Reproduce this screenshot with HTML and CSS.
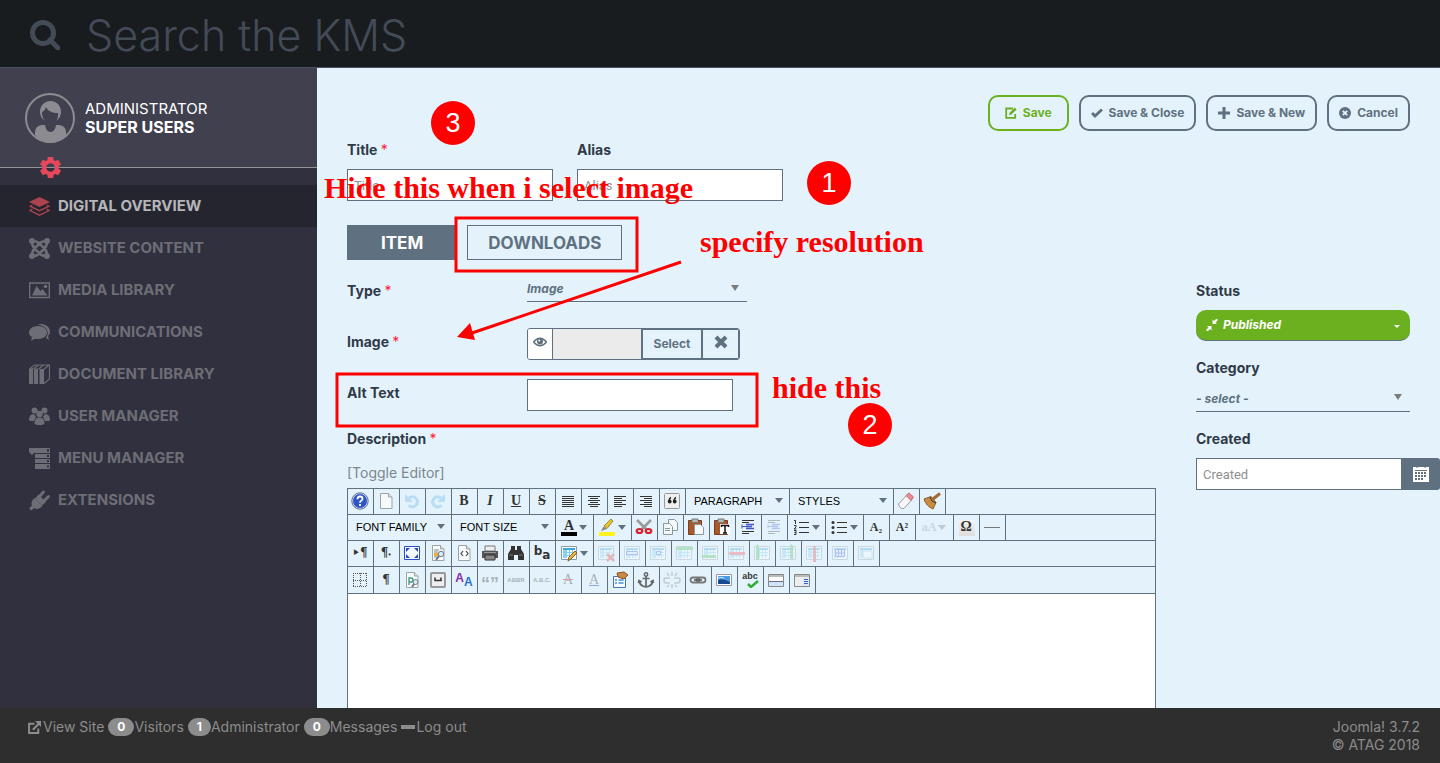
FILE: index.html
```html
<!DOCTYPE html>
<html lang="en">
<head>
<meta charset="utf-8">
<title>KMS – Digital Overview</title>
<link rel="stylesheet" href="styles.css">
</head>
<body>
<svg class="sprite" aria-hidden="true">
  <defs>
    <symbol id="pen-box" viewBox="0 0 12 12"><path d="M8 1.5H1.2v9.3h9V7" fill="none" stroke="currentColor" stroke-width="1.8"/><path d="M4 8.3 4.6 5.800 9.800.6l1.800 1.800L6.400 7.600z" fill="currentColor"/></symbol>
    <symbol id="out" viewBox="0 0 12 12"><path d="M6 2.500H1v8.500h8.500V7" fill="none" stroke="currentColor" stroke-width="1.800"/><path d="M4.500 8 10 2.500" stroke="currentColor" stroke-width="2"/><path d="M6.500 0H12v5.500z" fill="currentColor"/></symbol>
    <symbol id="page" viewBox="0 0 18 18"><path d="M3.500 1.500h8l3.500 3.500v11.500H3.500z" fill="#f7fafb" stroke="#9aa5a5"/><path d="M11.500 1.500V5H15" fill="#dfe5e5" stroke="#9aa5a5"/></symbol>
    <symbol id="tbl" viewBox="0 0 18 18"><path d="M1.500 2.500h15v13h-15z" fill="#fff" stroke="#8d9ca5"/><path d="M3 4h12v2H3z" fill="#39a9e0"/><path d="M3 6h3v8H3z" fill="#8fd6f5"/><path d="M3 8.500h12M3 11.500h12M6.500 6v8M9.500 6v8M12.500 6v8" stroke="#7ccbf0" fill="none"/></symbol>
    <symbol id="clip" viewBox="0 0 18 18"><path d="M1.500 2.500h13v14h-13z" fill="#a8592c" stroke="#7d3e1b"/><path d="M5 1h6v3.500H5z" fill="#b9b9b9" stroke="#777"/></symbol>
    <symbol id="box" viewBox="0 0 18 18"><rect x="1.500" y="1.500" width="15" height="15" rx="1" fill="#eee" stroke="#999"/></symbol>
  </defs>
</svg>

<header class="topbar">
  <svg class="search-icon" viewBox="0 0 30 30" aria-hidden="true"><circle cx="13" cy="13" r="10.500" fill="none" stroke="currentColor" stroke-width="5"/><path d="m20 20 8 8" stroke="currentColor" stroke-width="5" stroke-linecap="round"/></svg>
  <input class="search" type="search" placeholder="Search the KMS" aria-label="Search the KMS">
</header>

<div class="body">
  <aside class="sidebar">
    <div class="profile">
      <svg class="avatar" viewBox="0 0 50 50" aria-hidden="true"><circle cx="25" cy="25" r="24" fill="none" stroke="#8b8b91" stroke-width="2"/><path d="M10 42V39q0-6 7-7h3q1 7 5.500 7t5.500-7h3q7 1 7 7v3q-6 8-15.500 8T10 42z" fill="#8b8b91"/><path d="M25.500 8C32 8 36 13 36 19c0 4-2 7-5 9 2-2 2-5 2-8-6 0-10-2-12-6-1 3-2 4-4 5 0 4 1 7 3 9-3-2-5-5-5-9 0-6 4-11 10.500-11z" fill="#8b8b91"/></svg>
      <div class="who"><span>ADMINISTRATOR</span><strong>SUPER USERS</strong></div>
      <button class="gear" aria-label="Settings"><svg viewBox="0 0 20 20"><path fill-rule="evenodd" fill="#e8475b" d="M7.500 0h5l.5 3 1.500.8 2.800-1.100L20 7l-2.300 2v2L20 13l-2.700 4.300-2.800-1.100-1.500.8-.5 3h-5L7 17l-1.500-.8-2.800 1.100L0 13l2.300-2V9L0 7l2.700-4.300 2.800 1.100L7 3zM10 6a4 4 0 1 0 0 8 4 4 0 0 0 0-8z"/></svg></button>
    </div>
    <nav class="nav" aria-label="Main">
      <a class="active" href="#"><svg viewBox="0 0 21 21"><path d="M10.500 1 21 6l-10.500 5L0 6z" fill="#ac4350"/><path d="m3.500 9-2.500 1.200 9.500 4.500 9.500-4.500L17.500 9M3.500 13 1 14.500l9.500 4.700 9.500-4.700L17.500 13" fill="none" stroke="#ac4350" stroke-width="1.300"/></svg>DIGITAL OVERVIEW</a>
      <a href="#"><svg viewBox="0 0 21 21" fill="none" stroke="currentColor"><g fill="currentColor" stroke="none"><circle cx="3" cy="3" r="3"/><circle cx="18" cy="3" r="3"/><circle cx="3" cy="18" r="3"/><circle cx="18" cy="18" r="3"/></g><path d="M3 3q0 5 2.500 7.500l5 5Q13 18 18 18M18 18q0-5-2.500-7.500l-5-5Q8 3 3 3M18 3q-5 0-7.500 2.500l-5 5Q3 13 3 18M3 18q5 0 7.500-2.500l5-5Q18 8 18 3" stroke-width="2.600"/></svg>WEBSITE CONTENT</a>
      <a href="#"><svg viewBox="0 0 21 21"><path d="M.7 3h19.600v14.500H.7z" fill="none" stroke="currentColor" stroke-width="1.400"/><path d="M3 15.500 7.500 6l4 5 2-2 5 6.500z" fill="currentColor"/><circle cx="16.500" cy="6.500" r="1.800" fill="currentColor"/></svg>MEDIA LIBRARY</a>
      <a href="#"><svg viewBox="0 0 21 21" fill="currentColor"><path d="M9 4c5 0 9 2.800 9 6.500S14 17 9 17c-1 0-2 0-3-.3L2 19l1-4C1 14 0 12.500 0 10.500 0 6.800 4 4 9 4z"/><path d="M9 2.500c7-2 12 3 12 7 0 2-1 3.500-2 4.500l1 4-3-2c3-4 3-11-8-13.500z"/></svg>COMMUNICATIONS</a>
      <a href="#"><svg viewBox="0 0 21 21"><path d="M0 5l4-1v16H0zM5 4.500h4V20H5zM10.500 5h4.500v15h-4.500z" fill="currentColor"/><path d="m.5 5 5-4h15v14L15 19.500M4.500 5l5-4M9.500 5l5-4M14.500 5.500l5.500-4.500" fill="none" stroke="currentColor" stroke-width="1.200"/></svg>DOCUMENT LIBRARY</a>
      <a href="#"><svg viewBox="0 0 21 21" fill="currentColor"><circle cx="5.500" cy="4.500" r="3"/><circle cx="15.500" cy="4.500" r="3"/><path d="M0 14q0-6 5-6l2 3-2 4H1zM21 14q0-6-5-6l-2 3 2 4h4z"/><circle cx="10.500" cy="8" r="3.200"/><path d="M5.500 17q0-5.500 5-5.500t5 5.500q0 2-5 2t-5-2z"/></svg>USER MANAGER</a>
      <a href="#"><svg viewBox="0 0 21 21" fill="currentColor"><path fill-rule="evenodd" d="M0 0h21v5H5L3 7 0 4zM18 1v2.500h2V1zM6 6h15v4H6zM18 7v2h2V7zM6 11h15v4H6zM18 12v2h2v-2zM6 16h15v5H6zM18 17.500v2h2v-2z"/></svg>MENU MANAGER</a>
      <a href="#"><svg viewBox="0 0 21 21"><path d="m5.500 8 8 8q-4 4.500-8.500 2L2.500 20.500 0 18.500l3-3q-2-4 2.500-7.500z" fill="currentColor"/><path d="M6 8.500 13 15.500 17 12 9.500 4.500z" fill="currentColor"/><path d="m10.500 6.500 4-4.500M15 11l4.500-4.500" stroke="currentColor" stroke-width="3" stroke-linecap="round"/></svg>EXTENSIONS</a>
    </nav>
  </aside>

  <main class="main">
    <div class="actions">
      <button class="btn save"><svg><use href="#pen-box"/></svg>Save</button>
      <button class="btn"><svg viewBox="0 0 12 12"><path d="m1 6 3 3 7-6.500" fill="none" stroke="currentColor" stroke-width="3"/></svg>Save &amp; Close</button>
      <button class="btn"><svg viewBox="0 0 12 12"><path d="M6 0v12M0 6h12" stroke="currentColor" stroke-width="3"/></svg>Save &amp; New</button>
      <button class="btn"><svg viewBox="0 0 12 12"><circle cx="6" cy="6" r="6" fill="currentColor"/><path d="m3.800 3.800 4.400 4.400M8.200 3.800 3.800 8.200" stroke="#e4f3fb" stroke-width="1.800"/></svg>Cancel</button>
    </div>

    <div class="heading-fields">
      <div class="field"><label for="title">Title <i>*</i></label><input id="title" class="text" placeholder="Title"></div>
      <div class="field"><label for="alias">Alias</label><input id="alias" class="text" placeholder="Alias"></div>
    </div>

    <div class="tabs"><button class="tab on">ITEM</button><button class="tab">DOWNLOADS</button></div>

    <div class="columns">
      <section class="form">
        <div class="row"><label for="type">Type <i>*</i></label><span class="picker type"><select id="type"><option>Image</option></select></span></div>
        <div class="row"><label for="image">Image <i>*</i></label>
          <div class="media">
            <button class="eye" aria-label="Preview"><svg viewBox="0 0 14 10"><path d="M.5 5Q7-2.500 13.500 5 7 12.500.5 5z" fill="none" stroke="currentColor" stroke-width="1.400"/><circle cx="7" cy="4.500" r="3" fill="currentColor"/><circle cx="6.300" cy="3.600" r="1" fill="#fff"/></svg></button>
            <input id="image" readonly>
            <button class="pick">Select</button>
            <button class="clear" aria-label="Clear"><svg viewBox="0 0 14 14"><path d="m2 2 10 10M12 2 2 12" stroke="currentColor" stroke-width="4"/></svg></button>
          </div></div>
        <div class="row"><label for="alt">Alt Text</label><input id="alt" class="text"></div>
        <label class="desc" for="description">Description <i>*</i></label>
        <a class="toggle" href="#">[Toggle Editor]</a>

        <div class="editor">
          <div class="tools">
            <button aria-label="Help"><svg viewBox="0 0 18 18"><circle cx="9" cy="9" r="7.500" fill="#2f55c8" stroke="#dbe4f5" stroke-width="1"/><circle cx="9" cy="9" r="8.200" fill="none" stroke="#5b6a92"/><path d="M6.500 7.200q0-2.700 2.500-2.700t2.500 2.200q0 1.300-1.300 2T9 10.800M9 12v2" fill="none" stroke="#fff" stroke-width="1.800"/></svg></button>
            <button aria-label="New document"><svg><use href="#page"/></svg></button>
            <button class="off" aria-label="Undo"><svg viewBox="0 0 18 18"><path d="M6 6q5-3 7.500 1t-1.500 7q-3 2-6.500-.5" fill="none" stroke="#55aee8" stroke-width="3"/><path d="M2 2v8h8z" fill="#55aee8"/></svg></button>
            <button class="off" aria-label="Redo"><svg viewBox="0 0 18 18"><path d="M12 6Q7 3 4.500 7T6 14q3 2 6.500-.5" fill="none" stroke="#55aee8" stroke-width="3"/><path d="M16 2v8H8z" fill="#55aee8"/></svg></button>
            <button class="b">B</button><button class="em">I</button><button class="u">U</button><button class="s">S</button>
            <button aria-label="Justify"><svg viewBox="0 0 18 18"><path d="M3 4.500h12M3 6.500h12M3 8.500h12M3 10.500h12M3 12.500h12M3 14.500h12" stroke="#333"/></svg></button>
            <button aria-label="Center"><svg viewBox="0 0 18 18"><path d="M3 4.500h12M5 6.500h8M3 8.500h12M5 10.500h8M3 12.500h12M5 14.500h8" stroke="#333"/></svg></button>
            <button aria-label="Left"><svg viewBox="0 0 18 18"><path d="M3 4.500h12M3 6.500h8M3 8.500h12M3 10.500h8M3 12.500h12M3 14.500h8" stroke="#333"/></svg></button>
            <button aria-label="Right"><svg viewBox="0 0 18 18"><path d="M3 4.500h12M7 6.500h8M3 8.500h12M7 10.500h8M3 12.500h12M7 14.500h8" stroke="#333"/></svg></button>
            <button aria-label="Blockquote"><svg viewBox="0 0 18 18"><use href="#box"/><path d="M8 5.500Q6.500 6 6 8.500M13 5.500Q11.500 6 11 8.500" stroke="#222" stroke-width="1.500" fill="none"/><circle cx="6.700" cy="9.500" r="1.900" fill="#222"/><circle cx="11.700" cy="9.500" r="1.900" fill="#222"/></svg></button>
            <span class="drop"><select aria-label="Format"><option>PARAGRAPH</option></select></span>
            <span class="drop"><select aria-label="Styles"><option>STYLES</option></select></span>
            <button aria-label="Clear formatting"><svg viewBox="0 0 18 18"><path d="m1.500 12 8-8.500 5.500 4-8 9q-4 1-5.500-4.500z" fill="#f8f6f6" stroke="#999"/><path d="m9 3.500 3-2.500 4.500 4-2.500 3.500z" fill="#ef8995" stroke="#c46c78"/></svg></button>
            <button aria-label="Clean up"><svg viewBox="0 0 18 18"><path d="m1 7 7-2.500 5 6L10 17Q3 14 1 7z" fill="#c98a42" stroke="#8e5c24"/><path d="m10 7 7-5.500" stroke="#a46a2d" stroke-width="3"/><path d="M7 5q1 5 6 6" fill="none" stroke="#333"/></svg></button>
          </div>
          <div class="tools">
            <span class="drop"><select aria-label="Font family"><option>FONT FAMILY</option></select></span>
            <span class="drop"><select aria-label="Font size"><option>FONT SIZE</option></select></span>
            <button class="split ink" aria-label="Text colour"><span>A</span></button>
            <button class="split" aria-label="Highlight"><svg viewBox="0 0 18 18"><path d="M1 14h16v4H1z" fill="#fff21f"/><path d="m6 8 7-7 2 2-6 7.500z" fill="#e9c52c" stroke="#9b8b3a"/><path d="m3 13 2.500-4.500L9 11z" fill="#888"/></svg></button>
            <button aria-label="Cut"><svg viewBox="0 0 18 18"><path d="m2 2 11 11M16 2 5 13" stroke="#999" stroke-width="2.500"/><ellipse cx="4.500" cy="13" rx="2.800" ry="2" fill="#f6d4d4" stroke="#cf2636" stroke-width="2.200"/><ellipse cx="13.500" cy="13" rx="2.800" ry="2" fill="#f6d4d4" stroke="#cf2636" stroke-width="2.200"/></svg></button>
            <button aria-label="Copy"><svg viewBox="0 0 18 18"><path d="M7.500 1.500h6l3 3v8h-9z" fill="#f5f9f9" stroke="#8a9a9a"/><path d="M2.500 5.500h6l3 3v8h-9z" fill="#f5f9f9" stroke="#8a9a9a"/><path d="M4 10.500h5M4 12.500h5" stroke="#8a9a9a"/></svg></button>
            <button aria-label="Paste"><svg viewBox="0 0 18 18"><use href="#clip"/><path d="M7.500 6.500h6l3 3v7h-9z" fill="#f5f9f9" stroke="#8a9a9a"/></svg></button>
            <button aria-label="Paste as text"><svg viewBox="0 0 18 18"><use href="#clip"/><path d="M7 6h10v10H7z" fill="#fff"/><path d="M8.500 9V7.500h7V9M12 7.500V15M10 15h4" fill="none" stroke="#111" stroke-width="1.500"/></svg></button>
            <button aria-label="Indent"><svg viewBox="0 0 18 18"><path d="M3 2.500h12M3 4.500h7M3 13.500h12M3 15.500h7" stroke="#333"/><path d="M7 6.500h8M7 8.500h6M7 10.500h8" stroke="#4257cc" stroke-width="1.500"/><path d="M3 8.500h4M3 6.500v4" stroke="#4257cc"/></svg></button>
            <button class="off" aria-label="Outdent"><svg viewBox="0 0 18 18"><path d="M3 2.500h12M3 4.500h7M3 13.500h12M3 15.500h7" stroke="#333"/><path d="M7 6.500h8M7 8.500h6M7 10.500h8" stroke="#4257cc" stroke-width="1.500"/><path d="M3 8.500h4M3 6.500v4" stroke="#4257cc"/></svg></button>
            <button class="split" aria-label="Numbered list"><svg viewBox="0 0 18 18"><path d="M7 4.500h10M7 9.500h10M7 14.500h10" stroke="#333"/><path d="M2 2.500h1.500V6M2 7.500h2v1.500L2 11h2.500M2 12.500h2v4H2M2.500 14.500H4" fill="none" stroke="#333"/></svg></button>
            <button class="split" aria-label="Bulleted list"><svg viewBox="0 0 18 18"><path d="M7 4.500h10M7 9.500h10M7 14.500h10" stroke="#333"/><circle cx="3" cy="4.500" r="1.500" fill="#333"/><circle cx="3" cy="9.500" r="1.500" fill="#333"/><circle cx="3" cy="14.500" r="1.500" fill="#333"/></svg></button>
            <button class="sub">A₂</button><button class="sub">A²</button>
            <button class="split off case" aria-label="Change case"><span>aA</span></button>
            <button class="omega">Ω</button>
            <button aria-label="Horizontal rule"><svg viewBox="0 0 18 18"><path d="M1 9.500h16" stroke="#777"/></svg></button>
          </div>
          <div class="tools">
            <button class="pil">‣¶</button><button class="pil">¶‧</button>
            <button aria-label="Fullscreen"><svg viewBox="0 0 18 18"><path d="M1.500 2.500h15v13h-15z" fill="#f2f8ff" stroke="#2e4bd0"/><path d="M3 8V4h4zM11 4h4v4zM15 10v4h-4zM7 14H3v-4z" fill="#2e4bd0"/></svg></button>
            <button aria-label="Preview"><svg viewBox="0 0 18 18"><use href="#page"/><path d="M5 6h5M5 8h4M5 13h5" stroke="#888"/><path d="M5 9h4v3H5z" fill="#eab12f"/><circle cx="12" cy="10" r="2.700" fill="#d7ecf7" stroke="#778"/><path d="m10 12-3 4" stroke="#778" stroke-width="2"/></svg></button>
            <button aria-label="Source"><svg viewBox="0 0 18 18"><use href="#page"/><path d="m8 7-2 2.500L8 12M11 7l2 2.500-2 2.500" fill="none" stroke="#444" stroke-width="1.200"/></svg></button>
            <button aria-label="Print"><svg viewBox="0 0 18 18"><path d="M4 2h10v5H4z" fill="#eee" stroke="#777"/><path d="M1 7h16v7H1z" fill="#555"/><path d="M4 11h10v5H4z" fill="#888" stroke="#333"/><path d="M3 8.500h12" stroke="#999"/></svg></button>
            <button aria-label="Find"><svg viewBox="0 0 18 18"><path d="M4 2h4v4h2V2h4v3l3 5v6h-6v-5H7v5H1v-6l3-5z" fill="#333"/><path d="M2 11h4M12 11h4" stroke="#777"/></svg></button>
            <button class="ba"><span>b</span><span>a</span></button>
            <button class="split" aria-label="Table"><svg viewBox="0 0 18 18"><use href="#tbl"/><path d="m8 17 1-4 6-6 2 2-6 6z" fill="#efb23b" stroke="#82622a"/></svg></button>
            <button class="off" aria-label="Delete table"><svg viewBox="0 0 18 18"><use href="#tbl"/><path d="m10 10 7 7M17 10l-7 7" stroke="#d33" stroke-width="2.500"/></svg></button>
            <button class="off" aria-label="Row properties"><svg viewBox="0 0 18 18"><use href="#tbl"/><path d="M3.500 7.500h11v3h-11z" fill="#dfe4ff" stroke="#3650d8"/></svg></button>
            <button class="off" aria-label="Cell properties"><svg viewBox="0 0 18 18"><use href="#tbl"/><path d="M7.500 7.500h4v3h-4z" fill="#dfe4ff" stroke="#3650d8"/></svg></button>
            <button class="off" aria-label="Insert row before"><svg viewBox="0 0 18 18"><use href="#tbl"/><path d="M2 3h16v3H2l-2-1.500z" fill="#4b4"/></svg></button>
            <button class="off" aria-label="Insert row after"><svg viewBox="0 0 18 18"><use href="#tbl"/><path d="M2 11h13v3H2l-2-1.500z" fill="#4b4"/></svg></button>
            <button class="off" aria-label="Delete row"><svg viewBox="0 0 18 18"><use href="#tbl"/><path d="M3 8h15v3H3L1 9.500z" fill="#e44"/></svg></button>
            <button class="off" aria-label="Insert column before"><svg viewBox="0 0 18 18"><use href="#tbl"/><path d="M3 2l1.500-2L6 2v13H3z" fill="#4b4"/></svg></button>
            <button class="off" aria-label="Insert column after"><svg viewBox="0 0 18 18"><use href="#tbl"/><path d="M11 2l1.500-2L14 2v13h-3z" fill="#4b4"/></svg></button>
            <button class="off" aria-label="Delete column"><svg viewBox="0 0 18 18"><use href="#tbl"/><path d="M8 3l1.500-2L11 3v15H8z" fill="#d44"/></svg></button>
            <button class="off" aria-label="Split cells"><svg viewBox="0 0 18 18"><use href="#tbl"/><path d="M4.500 5.500h9v7h-9zM4.500 9h9M7.500 5.500v7M10.500 5.500v7" fill="#dfe4ff" stroke="#3650d8"/></svg></button>
            <button class="off" aria-label="Merge cells"><svg viewBox="0 0 18 18"><use href="#tbl"/><path d="M6 7h9v7H6z" fill="#fff" stroke="#9bd"/></svg></button>
          </div>
          <div class="tools last">
            <button aria-label="Guidelines"><svg viewBox="0 0 18 18"><path d="M2 2.500h14M2 9.500h14M2 15.500h14M2.500 2v14M9.500 2v14M15.500 2v14" fill="none" stroke="#555" stroke-dasharray="1 1"/></svg></button>
            <button class="pil">¶</button>
            <button aria-label="Page preview"><svg viewBox="0 0 18 18"><use href="#page"/><path d="M6 14V7h2q2 0 2 2t-2 2H6" fill="none" stroke="#3a9a78" stroke-width="1.300"/><circle cx="12.500" cy="11" r="2.500" fill="#d7ecf7" stroke="#778"/><path d="m11 13-2 3" stroke="#778" stroke-width="2"/></svg></button>
            <button aria-label="Non-breaking space"><svg viewBox="0 0 18 18"><rect x="2" y="2" width="14" height="14" rx="1" fill="#eee" stroke="#999" stroke-width="2"/><path d="M6 6.500v3h6v-3" fill="none" stroke="#333" stroke-width="1.500"/></svg></button>
            <button class="aa" aria-label="Style"><b>A</b><b>A</b></button>
            <button class="off tiny big">“”</button><button class="off tiny">ABBR</button><button class="off tiny">A.B.C.</button>
            <button class="off del">A</button><button class="off ins">A</button>
            <button aria-label="Attributes"><svg viewBox="0 0 18 18"><path d="M2.500 5.500h12v11h-12z" fill="#f4faff" stroke="#4476b7"/><path d="M4 9h2M4 12h2M7.500 9h5M7.500 12h5" stroke="#4690d9" stroke-width="1.500"/><path d="m6 2 7-1 4 3-4 4-6-2z" fill="#c98846" stroke="#895526"/></svg></button>
            <button aria-label="Anchor"><svg viewBox="0 0 18 18"><circle cx="9" cy="3.500" r="1.700" fill="none" stroke="#666" stroke-width="1.500"/><path d="M9 5v11M5.500 7.500h7M2 10q1 5 7 6 6-1 7-6M1.500 12 2 9.500 4.500 11M16.500 12 16 9.500 13.500 11" fill="none" stroke="#666" stroke-width="1.700"/></svg></button>
            <button class="off" aria-label="Unlink"><svg viewBox="0 0 18 18"><path d="M7 7H3Q1 7 1 9.500T3 12h4M11 7h4q2 0 2 2.500T15 12h-4M9 1v4M9 13v4M4 2l2 3M14 2l-2 3M4 16l2-2M14 16l-2-2" fill="none" stroke="#777" stroke-width="1.500"/></svg></button>
            <button aria-label="Link"><svg viewBox="0 0 18 18"><rect x="1.500" y="6.500" width="9" height="5" rx="2.500" fill="none" stroke="#777" stroke-width="1.800"/><rect x="7.500" y="6.500" width="9" height="5" rx="2.500" fill="none" stroke="#777" stroke-width="1.800"/><path d="M5 9h8" stroke="#555" stroke-width="1.500"/></svg></button>
            <button aria-label="Image"><svg viewBox="0 0 18 18"><path d="M1.500 3.500h15v11h-15z" fill="#fff" stroke="#99a"/><path d="M3 5h12v8H3z" fill="#4a9be8"/><path d="M3 9q5-2 12 2v2H3z" fill="#1c4a8f"/><path d="M3 7q3-1 6 0" stroke="#d7eeff" fill="none"/></svg></button>
            <button class="abc" aria-label="Spellcheck"><span>abc</span><svg viewBox="0 0 12 8"><path d="m1 4 3 3 7-6" fill="none" stroke="#2fae35" stroke-width="2.500"/></svg></button>
            <button aria-label="Page break"><svg viewBox="0 0 18 18"><path d="M1.500 3.500h15v12h-15z" fill="#fff" stroke="#888"/><path d="M2 4h14v2H2z" fill="#bbb"/><path d="M2 11h14v4H2z" fill="#cfe4f8"/><path d="M2 10.500h14" stroke="#668"/></svg></button>
            <button aria-label="Read more"><svg viewBox="0 0 18 18"><path d="M1.500 3.500h15v12h-15z" fill="#eee" stroke="#888"/><path d="M2 4h14v2H2z" fill="#bbb"/><path d="M10 7h6v8h-6z" fill="#d8e6ff"/><path d="M11 8.500h4M11 10.500h4M11 12.500h4" stroke="#3d65c9"/></svg></button>
          </div>
          <textarea id="description"></textarea>
        </div>
      </section>

      <aside class="meta">
        <label for="status">Status</label>
        <span class="picker status"><svg viewBox="0 0 12 12"><path d="M12 1 9.500 3.500 11 5H6.500V.5L8 2 10.500-.500zM0 11l2.500-2.500L1 7h4.500v4.500L4 10l-2.500 2.500z" fill="#fff"/></svg><select id="status"><option>Published</option></select></span>
        <label for="category">Category</label>
        <span class="picker category"><select id="category"><option>- select -</option></select></span>
        <label for="created">Created</label>
        <div class="date"><input id="created" class="text" placeholder="Created"><button aria-label="Choose date"><svg viewBox="0 0 16 16"><path d="M0 1h16v15H0z" fill="#fff"/><path d="M2 4.500h12" stroke="#5f7180"/><path d="M2 7h12M2 10h12M2 13h9" stroke="#5f7180" stroke-width="2" stroke-dasharray="2 1"/><path d="M4 0v2M12 0v2" stroke="#5f7180"/></svg></button></div>
      </aside>
    </div>
  </main>
</div>

<footer class="footer">
  <nav class="links" aria-label="Status">
    <a href="#"><svg><use href="#out"/></svg>View Site</a>
    <a href="#"><b>0</b>Visitors</a>
    <a href="#"><b>1</b>Administrator</a>
    <a href="#"><b>0</b>Messages</a>
    <a href="#"><em></em>Log out</a>
  </nav>
  <div class="credit">Joomla! 3.7.2<br>© ATAG 2018</div>
</footer>

<div class="notes">
  <svg viewBox="0 0 1440 763" aria-hidden="true"><path d="M456 218h181v53H456zM337 374h420v52H337z" fill="none" stroke="red" stroke-width="3"/><path d="m681 262-209 71" stroke="red" stroke-width="3"/><path d="m457 337 13-14 5 17z" fill="red"/></svg>
  <p class="note n-hide">Hide this when i select image</p>
  <p class="note n-res">specify resolution</p>
  <p class="note n-alt">hide this</p>
  <span class="pin p3">3</span><span class="pin p1">1</span><span class="pin p2">2</span>
</div>
</body>
</html>
```
FILE: styles.css
```css
* { box-sizing: border-box; }
body {
  margin: 0;
  height: 100vh;
  display: flex;
  flex-direction: column;
  overflow: hidden;
  position: relative;
  background: #e4f3fb;
  color: #5f7180;
  font: 14px/18px Inter, "Liberation Sans", sans-serif;
}
button, input, select, textarea { font: inherit; color: inherit; border-radius: 0; margin: 0; }
button { padding: 0; background: none; border: 0; cursor: pointer; }
a { color: inherit; text-decoration: none; }
select { appearance: none; border: 0; background: none; width: 100%; height: 100%; padding: 0; }
.sprite { position: absolute; width: 0; height: 0; }

.topbar {
  display: flex;
  align-items: center;
  gap: 26px;
  flex: none;
  height: 68px;
  padding: 2px 30px 0;
  background: #191c1f;
  border-bottom: 1px solid #4a545e;
  color: #434b57;
}
.search-icon { width: 30px; height: 30px; }
.search {
  flex: 1;
  border: 0;
  padding: 0;
  background: none;
  font: 300 43px/50px Inter, sans-serif;
}
.search::placeholder { color: #434b57; opacity: 1; }

.body { flex: 1; min-height: 0; display: flex; }
.sidebar { width: 317px; flex: none; background: #30303e; }
.profile {
  position: relative;
  display: flex;
  gap: 10px;
  height: 100px;
  padding: 25px 25px 0;
  background: #40404f;
  border-bottom: 1px solid #929299;
}
.avatar { width: 50px; height: 50px; }
.who { display: flex; flex-direction: column; padding-top: 7px; color: #fff; font-size: 15px; }
.who strong { font-size: 16px; }
.gear { position: absolute; left: 40px; bottom: -11px; width: 21px; height: 21px; }
.gear svg { display: block; }
.nav { display: flex; flex-direction: column; padding-top: 17px; }
.nav a {
  display: flex;
  align-items: center;
  gap: 8px;
  height: 42px;
  padding-left: 29px;
  color: #6d6d76;
  font-size: 15px;
  font-weight: 700;
}
.nav svg { width: 21px; height: 21px; }
.nav .active { background: #252530; color: #b5b5ba; }

.main { flex: 1; min-width: 0; padding: 27px 30px 0; overflow: hidden; }
.actions { display: flex; justify-content: flex-end; gap: 10px; }
.btn {
  display: flex;
  align-items: center;
  gap: 6px;
  height: 36px;
  padding: 0 10px;
  border: 2px solid #5f7180;
  border-radius: 10px;
  font-size: 12px;
  font-weight: 700;
}
.btn svg { width: 12px; height: 12px; }
.btn.save { padding: 0 15px; border-color: #6bb01e; color: #6bb01e; }

label { color: #303a48; font-weight: 700; }
label i { color: #ff1a3c; font-style: normal; font-weight: 400; }
.heading-fields { display: flex; gap: 24px; padding-top: 10px; }
.field { display: flex; flex-direction: column; gap: 10px; }
.text {
  width: 206px;
  height: 32px;
  padding: 0 6px;
  border: 1px solid #5f7180;
  background: #fff;
  font: 13px/18px Roboto, sans-serif;
}
.text::placeholder { color: #8f8f8f; opacity: 1; }
.tabs { display: flex; gap: 10px; padding-top: 24px; }
.tab {
  height: 35px;
  padding: 0 20px;
  border: 1px solid #5f7180;
  font-size: 17px;
  font-weight: 700;
}
.tab.on { padding: 0 33px; background: #5f7180; color: #fff; }

.columns { display: grid; grid-template-columns: 1fr 214px; gap: 40px; padding-top: 17px; }
.form { min-width: 0; display: flex; flex-direction: column; }
.row { display: grid; grid-template-columns: 180px 1fr; min-height: 32px; margin-bottom: 19px; align-items: start; }
.row label { padding-top: 5px; }
.picker {
  position: relative;
  display: flex;
  align-items: center;
  border-bottom: 1px solid #5f7180;
  font-size: 12px;
  font-weight: 700;
  font-style: italic;
}
.picker::after {
  content: "";
  position: absolute;
  right: 8px;
  top: 8px;
  border: 4px solid transparent;
  border-top: 6px solid #7c7c7c;
  border-bottom: 0;
  pointer-events: none;
}
.type { width: 220px; height: 25px; }
.media {
  display: flex;
  width: 213px;
  height: 32px;
  border: 1px solid #5f7180;
  border-radius: 3px;
  overflow: hidden;
  font-size: 12px;
  font-weight: 700;
}
.media svg { width: 14px; height: 14px; }
.eye { width: 25px; background: #fff; border-right: 1px solid #5f7180; }
.media input { flex: 1; min-width: 0; border: 0; background: #ebebeb; }
.pick { width: 61px; border: 1px solid #5f7180; border-left-width: 2px; }
.clear { width: 37px; border: 1px solid #5f7180; }
.desc { align-self: flex-start; }
.toggle { margin: 16px 0 6px; color: #7c868c; }

.editor { display: flex; flex-direction: column; border: 1px solid #5f7180; }
.tools { display: flex; height: 26px; border-bottom: 1px solid #5f7180; color: #333; }
.tools.last { height: 27px; }
.tools button, .drop { flex: none; width: 26px; border-right: 1px solid #5f7180; }
.tools button {
  display: flex;
  align-items: center;
  justify-content: center;
  padding: 0 1px 1px 0;
  font: 700 14px/18px "Liberation Serif", serif;
}
.tools.last button { padding-bottom: 0; }
.tools svg { width: 18px; height: 18px; }
.tools .off > * { opacity: .3; }
.tools .off.tiny, .tools .del, .tools .ins { color: #a7b1b8; }
.tools .drop { position: relative; width: 104px; color: #000; font: 11px/18px "Liberation Sans", sans-serif; }
.drop select { padding-left: 8px; padding-bottom: 1px; }
.drop::after, .split::after {
  content: "";
  border: 4px solid transparent;
  border-top: 5px solid #5f7180;
  border-bottom: 0;
}
.drop::after { position: absolute; right: 6px; top: 9px; pointer-events: none; }
.tools .split { width: 38px; gap: 2px; }
.split.off::after { opacity: .3; }
.tools .em { font-style: italic; }
.tools .u { text-decoration: underline; }
.tools .s { text-decoration: line-through; }
.ink span { width: 16px; line-height: 13px; border-bottom: 4px solid #000; }
.tools .sub { font-size: 12px; }
.tools .case { font-size: 12px; color: #7f93b8; }
.tools .omega { background: linear-gradient(#f4f4f4, #ddd) center / 16px 16px no-repeat; }
.tools .pil { font: 700 12px/18px "DejaVu Serif", serif; }
.tools .ba { font: 700 12px/12px "DejaVu Sans", sans-serif; }
.ba span:first-child { padding-bottom: 4px; }
.ba span:last-child { padding-top: 4px; }
.tools .aa { font: 700 12px/14px "Liberation Sans", sans-serif; }
.aa b:first-child { color: #8a2aa5; padding-bottom: 4px; }
.aa b:last-child { color: #2a6fd0; padding-top: 3px; }
.tools .tiny { font: 700 6px/18px "Liberation Sans", sans-serif; }
.tools .tiny.big { padding-top: 8px; font-size: 18px; }
.tools .del { text-decoration: line-through #e09a9a; font-weight: 400; }
.tools .ins { text-decoration: underline #8aa5e0; font-weight: 400; }
.tools .abc { flex-direction: column; font: 700 9px/8px "Liberation Sans", sans-serif; }
.tools .abc svg { width: 12px; height: 8px; align-self: flex-end; margin-right: 3px; }
.editor textarea { height: 220px; border: 0; resize: none; background: #fff; }

.meta { display: flex; flex-direction: column; padding-top: 5px; }
.status { height: 31px; margin: 10px 0 18px; padding: 0 10px; gap: 5px; border-radius: 10px; background: #6bb01e; color: #fff; }
.status svg { flex: none; width: 12px; height: 12px; }
.status::after { top: 15px; right: 10px; border-width: 3px; border-top: 3px solid #fff; }
.category { height: 26px; margin: 9px 0 18px; }
.date { display: flex; margin-top: 10px; margin-right: -30px; }
.date .text { flex: 1; min-width: 0; }
.date button { display: flex; align-items: center; justify-content: center; width: 38px; background: #5f7180; border-radius: 0 3px 3px 0; }
.date svg { width: 16px; height: 16px; }

.footer {
  flex: none;
  display: flex;
  justify-content: space-between;
  height: 55px;
  padding: 10px 20px 0 28px;
  background: #2e2e2e;
  color: #8c8c8c;
}
.links { display: flex; gap: 4px; align-items: flex-start; }
.links a { display: flex; align-items: center; }
.links svg { width: 13px; height: 13px; margin-right: 2px; }
.links b { padding: 0 9px; border-radius: 9px; background: #8c8c8c; color: #fff; font-size: 12px; }
.links em { width: 14px; height: 4px; margin-right: 1px; background: #8c8c8c; }
.credit { text-align: right; }

.notes { position: absolute; top: 0; left: 0; width: 1440px; height: 763px; pointer-events: none; color: #f00; }
.notes svg { display: block; }
.note { position: absolute; margin: 0; font: 700 30px/34px "Liberation Serif", serif; white-space: nowrap; }
.n-hide { left: 324px; top: 171px; }
.n-res { left: 700px; top: 225px; }
.n-alt { left: 772px; top: 371px; }
.pin {
  position: absolute;
  width: 44px;
  border-radius: 22px;
  background: #f00;
  color: #fff;
  font: 27px/44px "Liberation Sans", sans-serif;
  text-align: center;
}
.p3 { left: 431px; top: 101px; }
.p1 { left: 807px; top: 161px; }
.p2 { left: 848px; top: 403px; }
```
